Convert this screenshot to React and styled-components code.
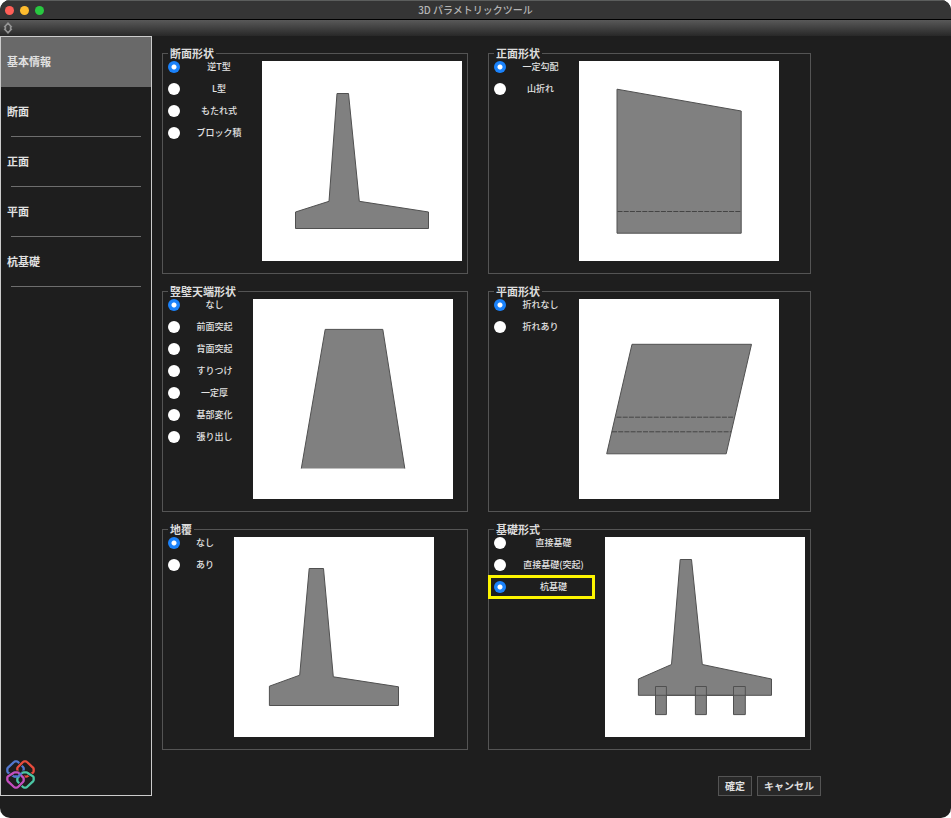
import React, { useState } from "react";
import styled, { createGlobalStyle, css } from "styled-components";

const GlobalStyle = createGlobalStyle`
  * { box-sizing: border-box; }
  body {
    margin: 0;
    background: #fff;
    font-family: "Noto Sans CJK JP", sans-serif;
    font-weight: 500;
    color: #e2e2e2;
  }
`;

const Window = styled.div`
  display: flex;
  flex-direction: column;
  min-height: 100vh;
  background: #1e1e1e;
  border-radius: 10px;
  overflow: hidden;
`;

const TitleBar = styled.header`
  display: grid;
  grid-template-columns: 1fr auto 1fr;
  align-items: center;
  height: 20px;
  padding: 0 5px;
  background: #353535;
  border-top: 1px solid #5c5e5d;
  border-bottom: 1px solid #000;
`;

const Lights = styled.div`
  display: flex;
  gap: 6px;
`;

const Light = styled.button`
  width: 9px;
  height: 9px;
  padding: 0;
  border: 0;
  border-radius: 50%;
  background: ${(p) => p.$color};
`;

const Title = styled.h1`
  margin: 0;
  font-size: 10px;
  line-height: 18px;
  font-weight: 500;
  color: #b4b4b4;
`;

const Toolbar = styled.div`
  display: flex;
  align-items: center;
  height: 16px;
  padding: 0 3px;
  background: linear-gradient(#595959, #282828);
`;

const Grip = styled.button`
  display: flex;
  padding: 0;
  border: 0;
  background: none;
`;

const Body = styled.div`
  display: flex;
  flex: 1;
  padding-bottom: 22px;
`;

const Sidebar = styled.aside`
  display: flex;
  flex-direction: column;
  justify-content: space-between;
  flex: 0 0 152px;
  border: 1px solid #ccc;
`;

const NavItem = styled.button`
  display: block;
  width: 100%;
  height: 50px;
  padding: 0 6px 2px;
  border: 0;
  text-align: left;
  font: inherit;
  font-size: 11px;
  font-weight: 700;
  line-height: 16px;
  color: #e0e0e0;
  background: ${(p) =>
    p.$active
      ? "#696969"
      : "linear-gradient(#6e6e6e, #6e6e6e) center bottom / calc(100% - 20px) 1px no-repeat"};
`;

const Logo = styled.svg`
  display: block;
  width: 29px;
  height: 29px;
  margin: 0 5px 6px;
`;

const Main = styled.main`
  display: flex;
  flex-direction: column;
  justify-content: space-between;
  padding-top: 10px;
`;

const Groups = styled.div`
  display: grid;
  grid-template-columns: max-content max-content;
  gap: 10px 20px;
  padding: 0 10px;
`;

const Group = styled.fieldset`
  min-width: 0;
  height: 228px;
  margin: 0;
  padding: 0 5px;
  border: 1px solid #545454;
`;

const Legend = styled.legend`
  padding: 0 2px;
  font-size: 11px;
  font-weight: 700;
  line-height: 15px;
  color: #dcdcdc;
`;

const GroupBody = styled.div`
  display: flex;
  align-items: flex-start;
  gap: 20px;
`;

const Options = styled.div`
  display: flex;
  flex-direction: column;
  gap: 10px;
`;

const Option = styled.label`
  position: relative;
  display: grid;
  grid-template-columns: 12px ${(p) => p.$labelWidth}px;
  gap: 16px;
  align-items: center;
  height: 12px;
  font-size: 9px;
  line-height: 12px;
  text-align: center;
  white-space: nowrap;

  ${(p) =>
    p.$highlighted &&
    css`
      &::after {
        content: "";
        position: absolute;
        inset: -6px -10px -6px -6px;
        border: 3px solid #fdf500;
      }
    `}
`;

const Radio = styled.input`
  appearance: none;
  width: 12px;
  height: 12px;
  margin: 0;
  border-radius: 50%;
  background: #fff;

  &:checked {
    background: radial-gradient(circle, #fff 2px, #1a82fb 3px);
  }
`;

const Preview = styled.svg`
  display: block;
  width: 200px;
  height: 200px;
  background: #fff;
  fill: #808080;
  stroke: #505050;
  stroke-width: 1;
`;

const Dashed = styled.path`
  stroke: #444;
  stroke-dasharray: 5 1.2;
`;

const Actions = styled.div`
  display: flex;
  justify-content: flex-end;
  gap: 5px;
`;

const ActionButton = styled.button`
  height: 20px;
  padding: 0 6px;
  border: 1px solid #545454;
  background: #282828;
  font: inherit;
  font-size: 10px;
  font-weight: 700;
  line-height: 18px;
  color: #e0e0e0;
`;

const NAV = ["基本情報", "断面", "正面", "平面", "杭基礎"];

const GROUPS = [
  {
    id: "section",
    title: "断面形状",
    labelWidth: 46,
    options: ["逆T型", "L型", "もたれ式", "ブロック積"],
    selected: 0,
    drawing: (
      <path d="M75 32.5H86.5L97.3 140.3L166.5 151V167.5H33.5V151L67 140.3Z" />
    ),
  },
  {
    id: "front",
    title: "正面形状",
    labelWidth: 37,
    options: ["一定勾配", "山折れ"],
    selected: 0,
    drawing: (
      <>
        <path d="M38 28.2L162.2 50V172.2H38Z" />
        <Dashed d="M38.5 150.5H162" />
      </>
    ),
  },
  {
    id: "crest",
    title: "竪壁天端形状",
    labelWidth: 37,
    options: ["なし", "前面突起", "背面突起", "すりつけ", "一定厚", "基部変化", "張り出し"],
    selected: 0,
    drawing: <path d="M48.3 169.5L72.2 30.4H129.8L151.8 169.5" />,
  },
  {
    id: "plan",
    title: "平面形状",
    labelWidth: 37,
    options: ["折れなし", "折れあり"],
    selected: 0,
    drawing: (
      <>
        <path d="M53 45.3H172.5L147.2 154.8H27.7Z" />
        <Dashed d="M37.5 118.2H155.5M33 132.8H152" />
      </>
    ),
  },
  {
    id: "coping",
    title: "地覆",
    labelWidth: 18,
    options: ["なし", "あり"],
    selected: 0,
    drawing: (
      <path d="M75.2 31.5H89.5L99.3 139.8L164.5 149.8V168.5H35.4V149.2L65.7 138.2Z" />
    ),
  },
  {
    id: "foundation",
    title: "基礎形式",
    labelWidth: 63,
    options: ["直接基礎", "直接基礎(突起)", "杭基礎"],
    selected: 2,
    highlighted: 2,
    drawing: (
      <>
        <path d="M75.2 22.5H86.5L97.3 127.5L166.5 142V158.3H33.4V142L66.5 127.5Z" />
        <path d="M50.5 149.5H61.4V177.6H50.5ZM90.4 149.5H101.4V177.6H90.4ZM128.5 149.5H140.3V177.6H128.5Z" />
        <path d="M50.5 158.3H140.3" fill="none" />
      </>
    ),
  },
];

function OptionGroup({ group }) {
  const [selected, setSelected] = useState(group.selected);
  return (
    <Group>
      <Legend>{group.title}</Legend>
      <GroupBody>
        <Options>
          {group.options.map((text, i) => (
            <Option
              key={text}
              $labelWidth={group.labelWidth}
              $highlighted={group.highlighted === i}
            >
              <Radio
                type="radio"
                name={group.id}
                checked={selected === i}
                onChange={() => setSelected(i)}
              />
              <span>{text}</span>
            </Option>
          ))}
        </Options>
        <Preview viewBox="0 0 200 200" aria-hidden="true">
          {group.drawing}
        </Preview>
      </GroupBody>
    </Group>
  );
}

const LINK =
  "M4 27Q4 25 6 23L24 6Q26 4 28 4H32Q34 4 36 6L51 21Q53 23 53 25V31Q53 33 51 35L38 48Q36 50 34 50H26Q24 50 22 48L6 38Q4 36 4 34Z";
const LINK_COLORS = ["#5378cf", "#e84c3d", "#4cc7a5", "#c44fc0"];
const LINK_TURNS = [
  "",
  "translate(87 0) scale(-1 1)",
  "rotate(180 43.5 43.5)",
  "translate(0 87) scale(1 -1)",
];

export default function App() {
  const [page, setPage] = useState(0);
  return (
    <>
      <GlobalStyle />
      <Window>
        <TitleBar>
          <Lights>
            <Light type="button" aria-label="閉じる" $color="#ff5f57" />
            <Light type="button" aria-label="しまう" $color="#febc2e" />
            <Light type="button" aria-label="拡大" $color="#28c840" />
          </Lights>
          <Title>3D パラメトリックツール</Title>
        </TitleBar>
        <Toolbar>
          <Grip type="button" aria-label="ツールバー">
            <svg width="10" height="12" viewBox="0 0 10 12" fill="none" stroke="#949494" strokeWidth="1.6">
              <path d="M1.2 5.2L5 1.2L8.8 5.2M1.2 6.8L5 10.8L8.8 6.8M2.4 4.5V7.5M7.6 4.5V7.5" />
            </svg>
          </Grip>
        </Toolbar>
        <Body>
          <Sidebar>
            <nav>
              {NAV.map((text, i) => (
                <NavItem
                  key={text}
                  type="button"
                  $active={page === i}
                  onClick={() => setPage(i)}
                >
                  {text}
                </NavItem>
              ))}
            </nav>
            <Logo viewBox="0 0 87 87" fill="none" strokeWidth="7" strokeLinecap="round" aria-hidden="true">
              {LINK_COLORS.map((color, i) => (
                <g key={color} transform={LINK_TURNS[i]}>
                  <path d={LINK} stroke="#1e1e1e" strokeWidth="11" />
                  <path d={LINK} stroke={color} />
                </g>
              ))}
              <path d="M28 50H34Q36 50 38 48L45 41" stroke={LINK_COLORS[0]} />
            </Logo>
          </Sidebar>
          <Main>
            <Groups>
              {GROUPS.map((group) => (
                <OptionGroup key={group.id} group={group} />
              ))}
            </Groups>
            <Actions>
              <ActionButton type="button">確定</ActionButton>
              <ActionButton type="button">キャンセル</ActionButton>
            </Actions>
          </Main>
        </Body>
      </Window>
    </>
  );
}
